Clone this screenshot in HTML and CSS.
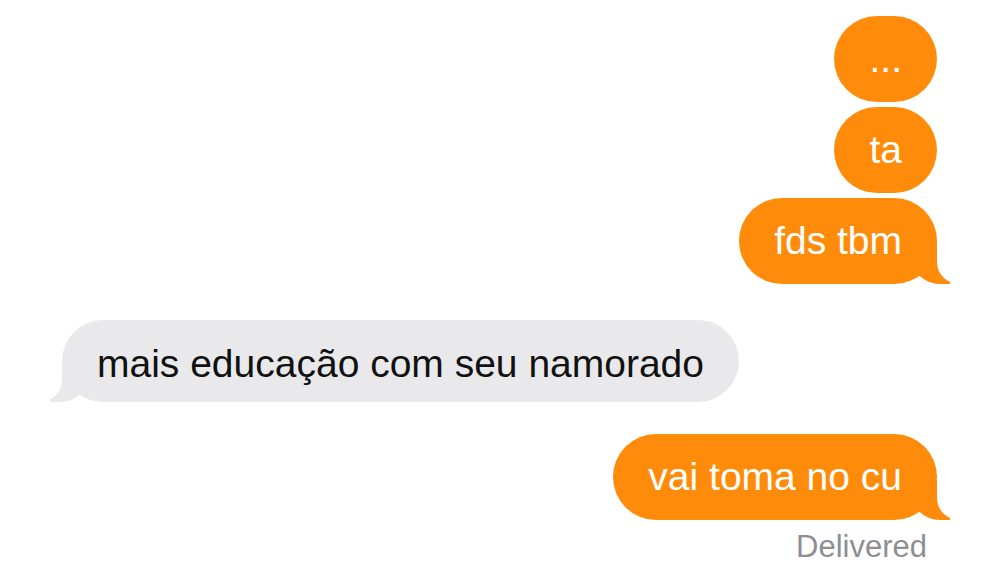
FILE: index.html
```html
<!DOCTYPE html>
<html lang="pt">

<head>
    <meta charset="UTF-8">
    <meta name="viewport" content="width=device-width, initial-scale=1.0">
    <title>Mensagens</title>
    <link rel="stylesheet" href="styles.css">
</head>

<body>
    <div id="thread">
        <!-- sent group -->
        <div class="bubble sent">...</div>
        <div class="bubble sent">ta</div>
        <div class="bubble sent tail">fds tbm</div>

        <!-- received -->
        <div class="bubble received tail">mais educação com seu namorado</div>

        <div class="bubble sent tail last">vai toma no cu</div>
        <div class="status">Delivered</div>
    </div>
</body>

</html>
```

FILE: styles.css
```css
* {
    margin: 0;
    padding: 0;
    box-sizing: border-box;
}

body {
    background-color: #fff;
    font-family: "Liberation Sans", Arial, sans-serif;
}

#thread {
    display: flex;
    flex-direction: column;
    padding: 16px 63px 0 62px;
}

.bubble {
    position: relative;
    padding: 19px 35px;
    font-size: 39px;
    line-height: 48px;
    border-radius: 43px;
    white-space: nowrap;
}

.sent {
    align-self: flex-end;
    background-color: #ff8b0a;
    color: #fff;
    margin-bottom: 5px;
}

.received {
    align-self: flex-start;
    background-color: #e9e9eb;
    color: #111;
    padding: 20px 35px 14px;
    margin-top: 31px;
    margin-bottom: 32px;
}

/* tail: coloured blob + white cut-out */
.tail::before,
.tail::after {
    content: "";
    position: absolute;
    bottom: 0;
    height: 40px;
}

.sent.tail::before {
    right: -13px;
    width: 40px;
    background-color: #ff8b0a;
    border-bottom-left-radius: 30px;
}

.sent.tail::after {
    right: -22px;
    width: 22px;
    background-color: #fff;
    border-bottom-left-radius: 22px;
}

.received.tail::before {
    left: -12px;
    width: 40px;
    background-color: #e9e9eb;
    border-bottom-right-radius: 30px;
}

.received.tail::after {
    left: -22px;
    width: 22px;
    background-color: #fff;
    border-bottom-right-radius: 22px;
}

.last {
    margin-bottom: 0;
}

.status {
    align-self: flex-end;
    margin-top: 12px;
    margin-right: 10px;
    font-size: 31px;
    line-height: 30px;
    color: #8e8e93;
}
```
